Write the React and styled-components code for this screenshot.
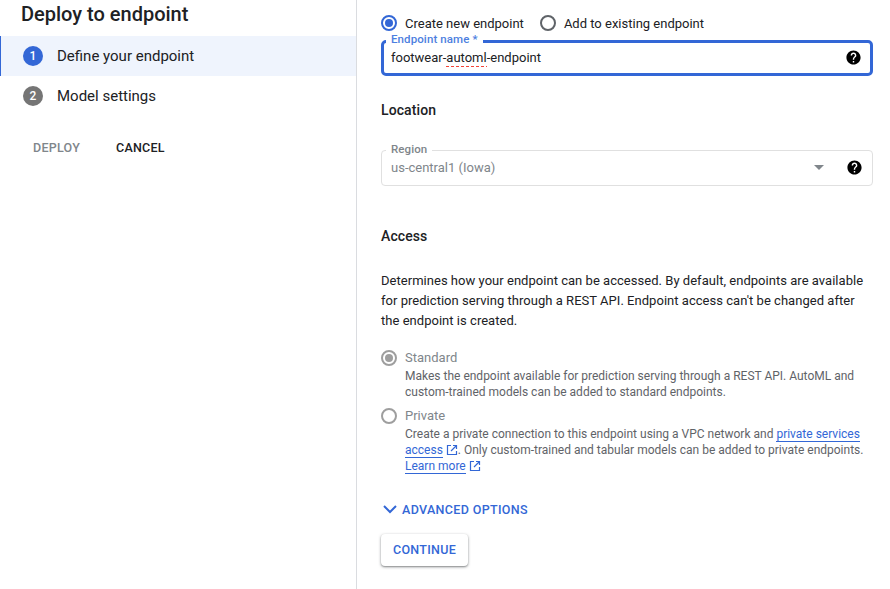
import React from 'react';
import styled, { createGlobalStyle } from 'styled-components';

const GlobalStyle = createGlobalStyle`
    html, body {
        margin: 0;
        padding: 0;
        height: 100%;
        overflow: hidden;
        background: #fff;
    }
    body {
        font-family: Roboto, "Liberation Sans", sans-serif;
        color: #202124;
    }
    * {
        box-sizing: border-box;
    }
`

const Page = styled.div`
    display: flex;
    width: 890px;
    height: 589px;
`

const Side = styled.aside`
    width: 357px;
    height: 100%;
    border-right: 1px solid #dadce0;
    flex-shrink: 0;
`

const Title = styled.h1`
    margin: 0;
    padding: 2px 0 0 21px;
    height: 36px;
    font-size: 20px;
    line-height: 24px;
    font-weight: 500;
    color: #202124;
`

const Step = styled.div`
    display: flex;
    align-items: center;
    height: 40px;
    padding-left: 23px;
    font-size: 15px;
    color: #202124;
    background: ${p => p.$active ? '#eff4fd' : 'transparent'};
    border-left: ${p => p.$active ? '1px solid #3367d6' : 'none'};
    ${p => p.$active && 'padding-left: 22px;'}
`

const StepNum = styled.span`
    display: flex;
    align-items: center;
    justify-content: center;
    width: 20px;
    height: 20px;
    margin-right: 14px;
    border-radius: 50%;
    font-size: 12px;
    font-weight: 500;
    color: #fff;
    background: ${p => p.$active ? '#3367d6' : '#757575'};
`

const SideActions = styled.div`
    display: flex;
    gap: 36px;
    padding: 24px 0 0 33px;
`

const TextAction = styled.span`
    font-size: 12.5px;
    line-height: 16px;
    font-weight: 500;
    letter-spacing: 0.25px;
    color: ${p => p.$muted ? '#80868b' : '#202124'};
`

const Main = styled.main`
    flex: 1;
    padding: 13px 17px 0 24px;
    font-size: 13px;
`

const RadioRow = styled.div`
    display: flex;
    gap: 16px;
    height: 20px;
    align-items: center;
`

const RadioLabel = styled.label`
    display: flex;
    align-items: center;
    gap: 8px;
    font-size: 13px;
    color: ${p => p.$muted ? '#80868b' : '#202124'};
`

const RadioMark = styled.span`
    display: block;
    position: relative;
    flex-shrink: 0;
    width: 16px;
    height: 16px;
    border-radius: 50%;
    border: 2px solid ${p => p.$color};
    &::after {
        content: '';
        display: ${p => p.$checked ? 'block' : 'none'};
        position: absolute;
        left: 2px;
        top: 2px;
        width: 8px;
        height: 8px;
        border-radius: 50%;
        background: ${p => p.$color};
    }
`

const Field = styled.div`
    position: relative;
    display: flex;
    align-items: center;
    height: 36px;
    padding: 0 ${p => p.$focused ? '8px' : '9px'} 2px ${p => p.$focused ? '7px' : '9px'};
    margin-top: ${p => p.$focused ? '7px' : '0'};
    border: ${p => p.$focused ? '3px solid #3367d6' : '1px solid #e0e0e0'};
    border-radius: ${p => p.$focused ? '5px' : '4px'};
    font-size: 13px;
    color: ${p => p.$focused ? '#202124' : '#80868b'};
`

const FieldLabel = styled.span`
    position: absolute;
    left: ${p => p.$focused ? '2px' : '4px'};
    top: ${p => p.$focused ? '-10px' : '-8px'};
    padding: 0 5px;
    background: #fff;
    font-size: 11.5px;
    line-height: 13px;
    font-weight: 500;
    letter-spacing: 0.1px;
    color: ${p => p.$focused ? '#4d7fe0' : '#80868b'};
`

const FieldValue = styled.span`
    flex: 1;
`

const Squiggle = styled.span`
    padding-bottom: 2px;
    background-image: repeating-linear-gradient(90deg, #f44336 0 3px, transparent 3px 5px);
    background-size: 100% 1px;
    background-position: left bottom;
    background-repeat: no-repeat;
`

const Arrow = styled.span`
    width: 0;
    height: 0;
    margin-right: 22px;
    border-left: 5px solid transparent;
    border-right: 5px solid transparent;
    border-top: 5px solid #80868b;
`

const SectionTitle = styled.h2`
    margin: ${p => p.$top} 0 ${p => p.$bottom};
    font-size: 14px;
    line-height: 20px;
    font-weight: 500;
    letter-spacing: 0.1px;
    color: #202124;
`

const Text = styled.p`
    margin: 0 0 17px;
    width: 490px;
    font-size: 13px;
    letter-spacing: 0.03px;
    line-height: 20px;
    color: #202124;
`

const Option = styled.div`
    display: grid;
    grid-template-columns: 16px 1fr;
    column-gap: 8px;
    margin-bottom: 6px;
`

const OptionTitle = styled.div`
    font-size: 13px;
    line-height: 20px;
    color: #80868b;
`

const OptionText = styled.div`
    grid-column: 2;
    font-size: 12px;
    line-height: 16px;
    color: #5f6368;
`

const OptionMark = styled.div`
    display: flex;
    align-items: center;
    height: 20px;
`

const DocLink = styled.a`
    color: #3367d6;
    border-bottom: 1px solid #3367d6;
    text-decoration: none;
`

const ExternalIcon = styled.svg`
    width: 12px;
    height: 12px;
    margin-left: 3px;
    vertical-align: -2px;
    fill: none;
    stroke: #3367d6;
    stroke-width: 1.2;
`

const Advanced = styled.div`
    display: flex;
    align-items: center;
    gap: 4px;
    height: 20px;
    margin: 25px 0 15px 1px;
    font-size: 12.5px;
    font-weight: 500;
    letter-spacing: 0.35px;
    color: #3367d6;
`

const ContinueButton = styled.button`
    display: block;
    width: 87px;
    height: 32px;
    padding: 0 0 1px;
    border: none;
    border-radius: 4px;
    background: #fff;
    box-shadow: 0 1px 3px rgba(60, 64, 67, 0.55), 0 1px 1px rgba(60, 64, 67, 0.2);
    font-family: inherit;
    font-size: 12.5px;
    font-weight: 500;
    letter-spacing: 0.3px;
    color: #3367d6;
`

const Help = () => (
    <svg width="17" height="17" viewBox="0 0 24 24" fill="#000">
        <path d="M12 2C6.48 2 2 6.48 2 12s4.48 10 10 10 10-4.48 10-10S17.52 2 12 2zm1 17h-2v-2h2v2zm2.07-7.75l-.9.92C13.45 12.9 13 13.5 13 15h-2v-.5c0-1.1.45-2.1 1.17-2.83l1.24-1.26c.37-.36.59-.86.59-1.41 0-1.1-.9-2-2-2s-2 .9-2 2H8c0-2.21 1.79-4 4-4s4 1.79 4 4c0 .88-.36 1.68-.93 2.25z" />
    </svg>
)

const External = () => (
    <ExternalIcon viewBox="0 0 12 12">
        <path d="M5 1.5H1.5v9h9V7" />
        <path d="M7 1.5h3.5V5M10.5 1.5L5 7" />
    </ExternalIcon>
)

const Chevron = () => (
    <svg width="16" height="16" viewBox="0 0 16 16" fill="none" stroke="#3367d6" strokeWidth="2">
        <path d="M2 5l6 6 6-6" />
    </svg>
)

export default function App() {
    return (
        <Page>
            <GlobalStyle />
            <Side>
                <Title>Deploy to endpoint</Title>
                <Step $active><StepNum $active>1</StepNum>Define your endpoint</Step>
                <Step><StepNum>2</StepNum>Model settings</Step>
                <SideActions>
                    <TextAction $muted>DEPLOY</TextAction>
                    <TextAction>CANCEL</TextAction>
                </SideActions>
            </Side>
            <Main>
                <RadioRow>
                    <RadioLabel><RadioMark $checked $color="#3367d6" />Create new endpoint</RadioLabel>
                    <RadioLabel><RadioMark $color="#5f6368" />Add to existing endpoint</RadioLabel>
                </RadioRow>
                <Field $focused>
                    <FieldLabel $focused>Endpoint name *</FieldLabel>
                    <FieldValue>footwear-<Squiggle>automl</Squiggle>-endpoint</FieldValue>
                    <Help />
                </Field>
                <SectionTitle $top="24px" $bottom="30px">Location</SectionTitle>
                <Field>
                    <FieldLabel>Region</FieldLabel>
                    <FieldValue>us-central1 (Iowa)</FieldValue>
                    <Arrow />
                    <Help />
                </Field>
                <SectionTitle $top="40px" $bottom="25px">Access</SectionTitle>
                <Text>
                    Determines how your endpoint can be accessed. By default, endpoints are available
                    for prediction serving through a REST API. Endpoint access can't be changed after
                    the endpoint is created.
                </Text>
                <Option>
                    <OptionMark><RadioMark $checked $color="#9e9e9e" /></OptionMark>
                    <OptionTitle>Standard</OptionTitle>
                    <OptionText>
                        Makes the endpoint available for prediction serving through a REST API. AutoML and
                        custom-trained models can be added to standard endpoints.
                    </OptionText>
                </Option>
                <Option>
                    <OptionMark><RadioMark $color="#9e9e9e" /></OptionMark>
                    <OptionTitle>Private</OptionTitle>
                    <OptionText>
                        Create a private connection to this endpoint using a VPC network and <DocLink>private services</DocLink> <DocLink>access</DocLink><External />. Only custom-trained and tabular models can be added to private endpoints.{' '}
                        <DocLink>Learn more</DocLink><External />
                    </OptionText>
                </Option>
                <Advanced><Chevron />ADVANCED OPTIONS</Advanced>
                <ContinueButton>CONTINUE</ContinueButton>
            </Main>
        </Page>
    );
}
